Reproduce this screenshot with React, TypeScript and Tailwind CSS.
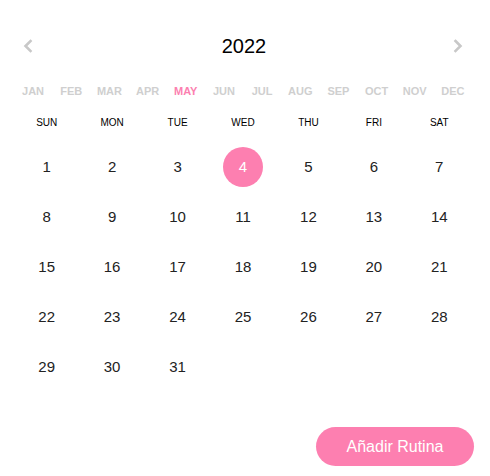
const MONTHS = ["JAN", "FEB", "MAR", "APR", "MAY", "JUN", "JUL", "AUG", "SEP", "OCT", "NOV", "DEC"];
const WEEKDAYS = ["SUN", "MON", "TUE", "WED", "THU", "FRI", "SAT"];

function Chevron({ dir }: { dir: "left" | "right" }) {
  return (
    <svg width="12" height="14" viewBox="0 0 12 14" fill="none">
      <path
        d={dir === "left" ? "M8.5 2 L3.5 7 L8.5 12" : "M3.5 2 L8.5 7 L3.5 12"}
        stroke="#c8c8c8"
        strokeWidth="2.6"
        strokeLinecap="square"
      />
    </svg>
  );
}

export default function App() {
  const days = Array.from({ length: 31 }, (_, i) => i + 1);
  // May 2022 starts on a Sunday
  return (
    <div className="w-[490px] h-[476px] bg-white pl-[14px] pr-[18px] pt-[32px] font-['Liberation_Sans',Arial,sans-serif]">
      {/* Year header */}
      <div className="flex items-center justify-between h-[28px] px-[8px]">
        <Chevron dir="left" />
        <span className="text-[20px] text-black leading-none pl-[2px]">2022</span>
        <Chevron dir="right" />
      </div>

      {/* Months */}
      <div className="grid grid-cols-12 mt-[24px] h-[14px]">
        {MONTHS.map((m) => (
          <div
            key={m}
            className={`text-center text-[11px] font-bold leading-[14px] ${m === "MAY" ? "text-[#fc7fb0]" : "text-[#cfcfcf]"}`}
          >
            {m}
          </div>
        ))}
      </div>

      {/* Weekdays */}
      <div className="grid grid-cols-7 mt-[19px] h-[12px]">
        {WEEKDAYS.map((d) => (
          <div key={d} className="text-center text-[10px] leading-[12px] text-black">
            {d}
          </div>
        ))}
      </div>

      {/* Days */}
      <div className="grid grid-cols-7 mt-[13px] auto-rows-[50px]">
        {days.map((d) => (
          <div key={d} className="flex items-center justify-center">
            {d === 4 ? (
              <span className="w-[40px] h-[40px] rounded-full bg-[#fd7fb0] text-white text-[15px] flex items-center justify-center">
                {d}
              </span>
            ) : (
              <span className="text-[15px] text-[#222]">{d}</span>
            )}
          </div>
        ))}
      </div>

      {/* Action */}
      <div className="flex justify-end mt-[35px] -mr-[2px]">
        <button className="w-[158px] h-[39px] rounded-full bg-[#fd7fb0] text-white text-[16px]">
          Añadir Rutina
        </button>
      </div>
    </div>
  );
}
